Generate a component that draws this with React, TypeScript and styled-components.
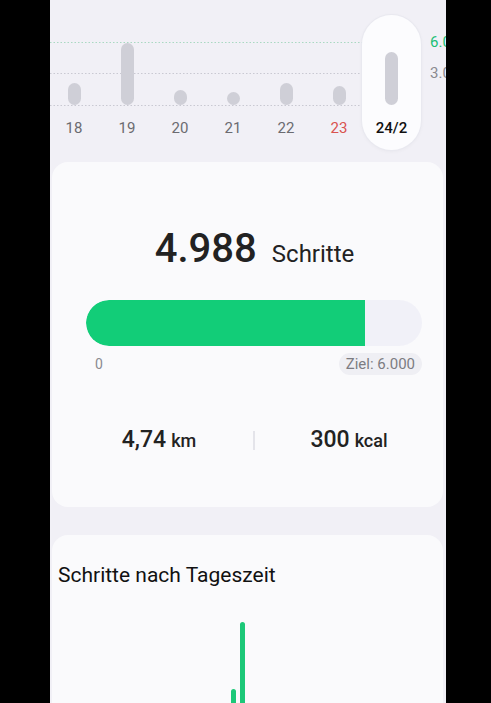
import styled, { createGlobalStyle } from "styled-components";

const GlobalStyle = createGlobalStyle`
  html, body {
    margin: 0;
    padding: 0;
    background: #000;
  }
  * { box-sizing: border-box; }
`;

const days = [
  { label: "18", value: 22 },
  { label: "19", value: 62 },
  { label: "20", value: 15 },
  { label: "21", value: 13 },
  { label: "22", value: 22 },
  { label: "23", value: 19, sunday: true },
  { label: "24/2", value: 53, active: true },
];

export default function App() {
  return (
    <>
      <GlobalStyle />
      <Screen>
        <TopChart>
          <GridLines width="312" height="110">
            <line x1="0" y1="42.5" x2="312" y2="42.5" stroke="#a9d9c2" strokeDasharray="1.5 2" />
            <line x1="0" y1="73.5" x2="312" y2="73.5" stroke="#c9c9d2" strokeDasharray="1.5 2" />
            <line x1="0" y1="105.5" x2="312" y2="105.5" stroke="#c9c9d2" strokeDasharray="1.5 2" />
          </GridLines>
          <Days>
            {days.map((d) => (
              <Day key={d.label} active={d.active}>
                <BarSlot>
                  <Bar style={{ height: d.value }} />
                </BarSlot>
                <DayLabel active={d.active} sunday={d.sunday}>{d.label}</DayLabel>
              </Day>
            ))}
          </Days>
          <Axis>
            <AxisLabel goal>6.000</AxisLabel>
            <AxisLabel>3.000</AxisLabel>
          </Axis>
        </TopChart>

        <Card height={345}>
          <Headline>
            <BigNumber>4.988</BigNumber>
            <Unit>Schritte</Unit>
          </Headline>
          <Track>
            <Fill style={{ width: `${(4988 / 6000) * 100}%` }} />
          </Track>
          <ScaleRow>
            <ScaleStart>0</ScaleStart>
            <GoalPill>Ziel: 6.000</GoalPill>
          </ScaleRow>
          <Stats>
            <Stat>
              <StatValue>4,74</StatValue>
              <StatUnit>km</StatUnit>
            </Stat>
            <Divider />
            <Stat>
              <StatValue>300</StatValue>
              <StatUnit>kcal</StatUnit>
            </Stat>
          </Stats>
        </Card>

        <Card height={200}>
          <SectionTitle>Schritte nach Tageszeit</SectionTitle>
          <HourChart>
            <HourBar style={{ height: 31 }} />
            <HourBar style={{ height: 98 }} />
          </HourChart>
        </Card>
      </Screen>
    </>
  );
}

const Screen = styled.div`
  width: 396px;
  height: 703px;
  margin-left: 50px;
  background: #f1f0f6;
  overflow: hidden;
  font-family: Roboto, "Liberation Sans", sans-serif;
  color: #1c1c1e;
`;

const TopChart = styled.div`
  position: relative;
  height: 162px;
  padding-top: 15px;
  display: flex;
  align-items: flex-start;
`;

const GridLines = styled.svg`
  position: absolute;
  left: 0;
  top: 0;
`;

const Days = styled.div`
  position: relative;
  display: flex;
  gap: 5px;
`;

const Day = styled.div<{ active?: boolean }>`
  width: ${(p) => (p.active ? "59px" : "48px")};
  margin-left: ${(p) => (p.active ? "-6px" : "0")};
  height: 135px;
  display: flex;
  flex-direction: column;
  align-items: center;
  border-radius: 30px;
  background: ${(p) => (p.active ? "#fcfcfe" : "transparent")};
  box-shadow: ${(p) => (p.active ? "0 0 0 1px #e9e9f0, 0 1px 4px rgba(0,0,0,0.05)" : "none")};
`;

const BarSlot = styled.div`
  height: 90px;
  display: flex;
  align-items: flex-end;
`;

const Bar = styled.div`
  width: 13px;
  border-radius: 7px;
  background: #cfcfd7;
`;

const DayLabel = styled.div<{ active?: boolean; sunday?: boolean }>`
  margin-top: 14px;
  font-size: 15px;
  line-height: 18px;
  font-weight: ${(p) => (p.active ? 500 : 400)};
  color: ${(p) => (p.active ? "#111" : p.sunday ? "#d9534f" : "#6b6b70")};
`;

const Axis = styled.div`
  margin-left: 9px;
  padding-top: 18px;
  display: flex;
  flex-direction: column;
  gap: 13px;
`;

const AxisLabel = styled.div<{ goal?: boolean }>`
  font-size: 15px;
  line-height: 18px;
  color: ${(p) => (p.goal ? "#1bbf74" : "#8a8a90")};
  white-space: nowrap;
`;

const Card = styled.div<{ height: number }>`
  height: ${(p) => p.height}px;
  margin: 0 3px 28px 2px;
  background: #fafafc;
  border-radius: 16px;
  overflow: hidden;
`;

const Headline = styled.div`
  padding-top: 63px;
  padding-left: 14px;
  display: flex;
  justify-content: center;
  align-items: baseline;
  gap: 15px;
`;

const BigNumber = styled.span`
  font-size: 40px;
  line-height: 48px;
  font-weight: 500;
  color: #222;
`;

const Unit = styled.span`
  font-size: 24px;
  font-weight: 400;
  color: #222;
`;

const Track = styled.div`
  margin: 27px 21px 0 34px;
  height: 46px;
  border-radius: 23px;
  background: #f1f1f8;
  overflow: hidden;
`;

const Fill = styled.div`
  height: 100%;
  background: #12cd78;
  border-radius: 23px 0 0 23px;
`;

const ScaleRow = styled.div`
  margin: 7px 21px 0 34px;
  display: flex;
  justify-content: space-between;
  align-items: center;
`;

const ScaleStart = styled.span`
  padding-left: 9px;
  font-size: 14px;
  color: #8a8a90;
`;

const GoalPill = styled.span`
  height: 22px;
  padding: 0 7px;
  border-radius: 11px;
  background: #efeff4;
  font-size: 15px;
  line-height: 22px;
  color: #7c7c82;
`;

const Stats = styled.div`
  margin-top: 51px;
  padding-left: 13px;
  display: grid;
  grid-template-columns: 1fr 2px 1fr;
  align-items: center;
`;

const Stat = styled.div`
  display: flex;
  justify-content: center;
  align-items: baseline;
  gap: 5px;
  line-height: 28px;
`;

const StatValue = styled.span`
  font-size: 23px;
  font-weight: 500;
  color: #222;
`;

const StatUnit = styled.span`
  font-size: 18px;
  font-weight: 500;
  color: #222;
`;

const Divider = styled.div`
  width: 2px;
  height: 19px;
  background: #e4e4ea;
`;

const SectionTitle = styled.div`
  padding: 28px 0 0 6px;
  font-size: 21px;
  line-height: 24px;
  color: #111;
`;

const HourChart = styled.div`
  margin-top: 12px;
  height: 121px;
  padding-left: 179px;
  display: flex;
  align-items: flex-end;
  gap: 4px;
`;

const HourBar = styled.div`
  width: 5px;
  border-radius: 3px 3px 0 0;
  background: #1cc878;
`;
